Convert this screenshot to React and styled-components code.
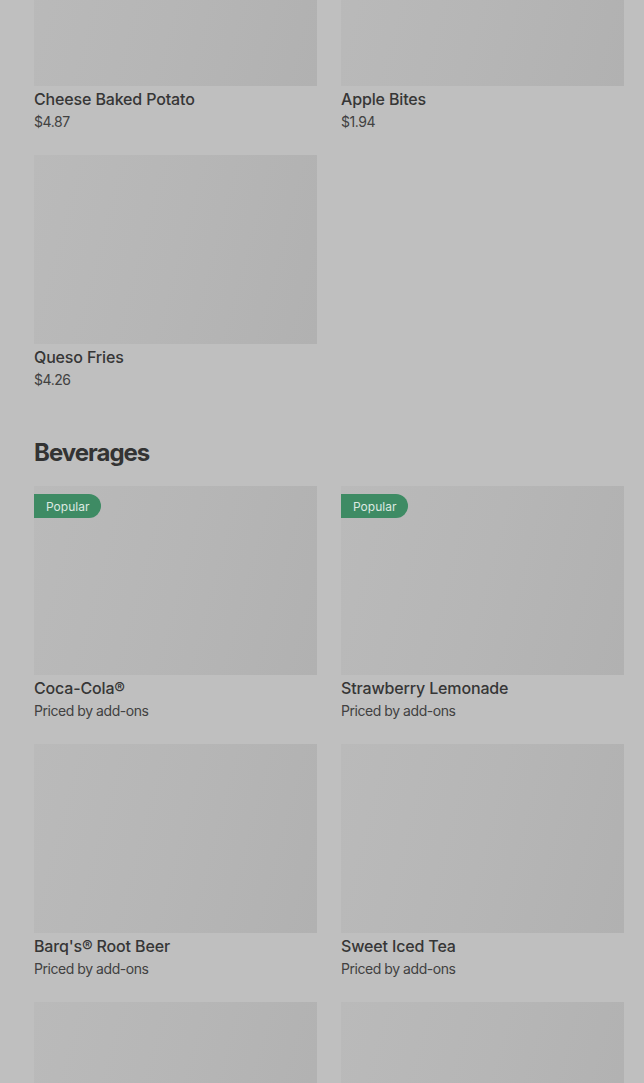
import React from 'react';
import styled, { createGlobalStyle } from 'styled-components';

const GlobalStyle = createGlobalStyle`
    html, body {
        margin: 0;
        padding: 0;
        background: #bfbfbf;
        overflow: hidden;
    }
    body {
        font-family: Inter, "Noto Sans", "Liberation Sans", sans-serif;
        -webkit-font-smoothing: antialiased;
    }
`;

const sections = [
    {
        title: null,
        items: [
            { name: "Cheese Baked Potato", price: "$4.87" },
            { name: "Apple Bites", price: "$1.94" },
            { name: "Queso Fries", price: "$4.26" },
        ],
    },
    {
        title: "Beverages",
        items: [
            { name: "Coca-Cola®", price: "Priced by add-ons", popular: true },
            { name: "Strawberry Lemonade", price: "Priced by add-ons", popular: true },
            { name: "Barq's® Root Beer", price: "Priced by add-ons" },
            { name: "Sweet Iced Tea", price: "Priced by add-ons" },
            { name: "", price: "" },
            { name: "", price: "" },
        ],
    },
];

function MenuCard({ item }) {
    return (
        <Card>
            <Thumb>
                {item.popular && <Badge>Popular</Badge>}
            </Thumb>
            {item.name && <ItemName>{item.name}</ItemName>}
            {item.price && <ItemPrice>{item.price}</ItemPrice>}
        </Card>
    );
}

function App() {
    return (
        <Page>
            <GlobalStyle />
            {sections.map((section, i) => (
                <Section key={i} first={i === 0}>
                    {section.title && <Heading>{section.title}</Heading>}
                    <Grid>
                        {section.items.map((item, index) => (
                            <MenuCard item={item} key={index} />
                        ))}
                    </Grid>
                </Section>
            ))}
        </Page>
    );
}

export default App;

const Page = styled.main`
    padding: 0 20px 0 34px;
    margin-top: -103px;
`;

const Section = styled.section`
    margin-top: ${props => props.first ? "0" : "47px"};
`;

const Heading = styled.h2`
    margin: 0 0 17px;
    font-size: 24px;
    line-height: 32px;
    font-weight: 700;
    letter-spacing: -1px;
    color: #333333;
`;

const Grid = styled.div`
    display: grid;
    grid-template-columns: 283px 283px;
    column-gap: 24px;
    row-gap: 23px;
`;

const Card = styled.div`
    display: flex;
    flex-direction: column;
`;

const Thumb = styled.div`
    position: relative;
    height: 189px;
    background: linear-gradient(105deg, #bababa 0%, #b6b6b6 50%, #b1b1b1 100%);
`;

const Badge = styled.span`
    position: absolute;
    top: 8px;
    left: 0;
    height: 24px;
    padding: 0 12px;
    display: flex;
    align-items: center;
    background: #3e8b64;
    color: #dde9e1;
    font-size: 12px;
    border-radius: 0 12px 12px 0;
`;

const ItemName = styled.div`
    margin-top: 3px;
    font-size: 16px;
    line-height: 20px;
    font-weight: 500;
    letter-spacing: -0.15px;
    color: #363636;
`;

const ItemPrice = styled.div`
    margin-top: 3px;
    font-size: 14px;
    line-height: 20px;
    color: #414141;
    letter-spacing: -0.45px;
`;
